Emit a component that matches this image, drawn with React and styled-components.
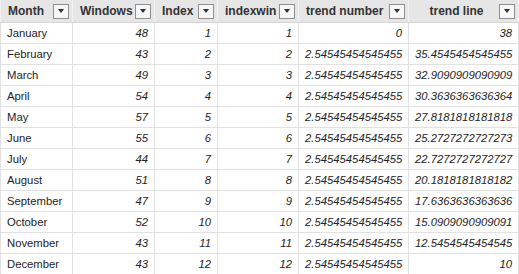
import styled, { createGlobalStyle } from "styled-components";

const GlobalStyle = createGlobalStyle`
  html, body {
    margin: 0;
    padding: 0;
    background: #ffffff;
  }
  body {
    font-family: "Segoe UI", "Liberation Sans", Arial, sans-serif;
    color: #252423;
  }
`;

const Table = styled.table`
  border-collapse: collapse;
  table-layout: fixed;
  width: 518px;
  font-size: 11.3px;
`;

const HeadCell = styled.th`
  background: #e6e6e6;
  height: 22px;
  padding: 0 3px 0 7px;
  border: 1px solid #f2f2f2;
  border-top: none;
  border-bottom-color: #d6d6d6;
  text-align: left;
  font-weight: 700;
  font-size: 12px;
  color: #333333;
  white-space: nowrap;
`;

const HeadInner = styled.div`
  display: flex;
  align-items: center;
  justify-content: ${(p) => (p.$center ? "center" : "space-between")};
  position: relative;
  padding-right: ${(p) => (p.$center ? "18px" : "0")};
`;

const Filter = styled.span`
  display: flex;
  align-items: center;
  justify-content: center;
  box-sizing: border-box;
  width: 16px;
  height: 15px;
  border: 1px solid #8f8f8f;
  background: #f7f7f7;
  flex: none;
  ${(p) => p.$center && "position: absolute; right: 0; top: 50%; margin-top: -7.5px;"}

  &::after {
    content: "";
    border-left: 3px solid transparent;
    border-right: 3px solid transparent;
    border-top: 4px solid #333333;
  }
`;

const Cell = styled.td`
  height: 20px;
  padding: 0 6px;
  border: 1px solid #e1e1e1;
  text-align: ${(p) => (p.$num ? "right" : "left")};
  font-style: ${(p) => (p.$num ? "italic" : "normal")};
  white-space: nowrap;
  overflow: hidden;
`;

const columns = [
  { name: "Month", width: 72 },
  { name: "Windows", width: 82 },
  { name: "Index", width: 63 },
  { name: "indexwin", width: 81 },
  { name: "trend number", width: 110 },
  { name: "trend line", width: 110, center: true },
];

const rows = [
  ["January", 48, 1, 1, "0", "38"],
  ["February", 43, 2, 2, "2.54545454545455", "35.4545454545455"],
  ["March", 49, 3, 3, "2.54545454545455", "32.9090909090909"],
  ["April", 54, 4, 4, "2.54545454545455", "30.3636363636364"],
  ["May", 57, 5, 5, "2.54545454545455", "27.8181818181818"],
  ["June", 55, 6, 6, "2.54545454545455", "25.2727272727273"],
  ["July", 44, 7, 7, "2.54545454545455", "22.7272727272727"],
  ["August", 51, 8, 8, "2.54545454545455", "20.1818181818182"],
  ["September", 47, 9, 9, "2.54545454545455", "17.6363636363636"],
  ["October", 52, 10, 10, "2.54545454545455", "15.0909090909091"],
  ["November", 43, 11, 11, "2.54545454545455", "12.5454545454545"],
  ["December", 43, 12, 12, "2.54545454545455", "10"],
];

export default function App() {
  return (
    <>
      <GlobalStyle />
      <Table>
        <colgroup>
          {columns.map((c) => (
            <col key={c.name} style={{ width: c.width }} />
          ))}
        </colgroup>
        <thead>
          <tr>
            {columns.map((c) => (
              <HeadCell key={c.name}>
                <HeadInner $center={c.center}>
                  <span>{c.name}</span>
                  <Filter $center={c.center} />
                </HeadInner>
              </HeadCell>
            ))}
          </tr>
        </thead>
        <tbody>
          {rows.map((r) => (
            <tr key={r[0]}>
              {r.map((v, i) => (
                <Cell key={i} $num={i > 0}>
                  {v}
                </Cell>
              ))}
            </tr>
          ))}
        </tbody>
      </Table>
    </>
  );
}
